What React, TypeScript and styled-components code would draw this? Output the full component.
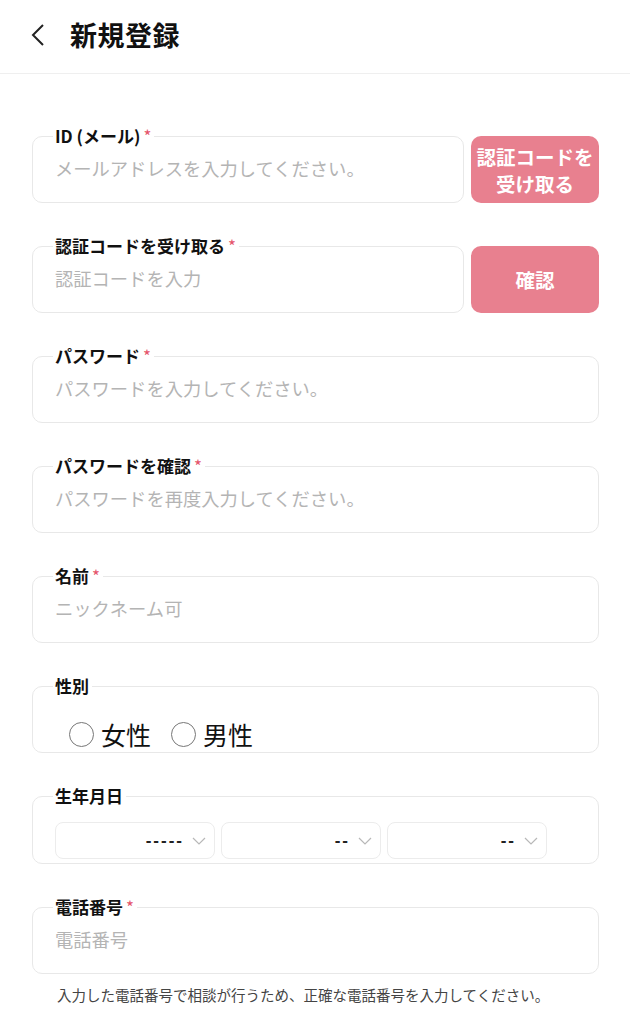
import React from "react";
import styled, { createGlobalStyle } from "styled-components";

const GlobalStyle = createGlobalStyle`
  html, body {
    margin: 0;
    padding: 0;
    background: #fff;
    font-family: "Noto Sans CJK JP", "Noto Sans", sans-serif;
    color: #111;
  }
  * { box-sizing: border-box; }
`;

const Header = styled.header`
  height: 74px;
  display: flex;
  align-items: center;
  padding: 0 0 4px 30px;
  border-bottom: 1px solid #efefef;
`;

const BackButton = styled.button`
  border: none;
  background: none;
  padding: 0;
  width: 22px;
  height: 28px;
  display: flex;
  align-items: center;
  cursor: pointer;
`;

const Title = styled.h1`
  margin: 0 0 0 18px;
  font-size: 27px;
  font-weight: 700;
  letter-spacing: 0.5px;
`;

const Form = styled.form`
  padding: 53px 31px 40px 32px;
  display: flex;
  flex-direction: column;
  gap: 34px;
`;

const Row = styled.div`
  display: flex;
  align-items: flex-end;
  gap: 7px;
`;

const Field = styled.fieldset<{ $bottom?: number }>`
  flex: 1;
  min-width: 0;
  margin: 0;
  padding: 0 22px ${(p) => p.$bottom ?? 13}px;
  border: 1px solid #e8e8e8;
  border-radius: 10px;
`;

const Legend = styled.legend`
  padding: 0 3px 0 2px;
  margin-left: -2px;
  font-size: 17px;
  line-height: 18px;
  font-weight: 700;
  color: #111;
`;

const Required = styled.span`
  color: #e5546b;
  margin-left: 3px;
  font-weight: 400;
`;

const Input = styled.input`
  display: block;
  width: 100%;
  height: 43px;
  margin-top: 1px;
  border: none;
  outline: none;
  padding: 0;
  font-family: inherit;
  font-size: 18.3px;
  color: #222;
  background: transparent;

  &::placeholder {
    color: #b4b4b4;
  }
`;

const PinkButton = styled.button`
  width: 128px;
  height: 67px;
  flex-shrink: 0;
  border: none;
  border-radius: 10px;
  background: #e8808f;
  color: #fff;
  font-family: inherit;
  font-size: 19.5px;
  font-weight: 700;
  line-height: 27px;
  padding: 0;
  cursor: pointer;
`;

const RadioGroup = styled.div`
  display: flex;
  gap: 20px;
  padding: 24px 0 0 14px;
  height: 54px;
`;

const RadioLabel = styled.label`
  display: flex;
  align-items: center;
  gap: 7px;
  font-size: 25px;
  line-height: 30px;
  color: #111;
`;

const Radio = styled.input`
  appearance: none;
  width: 25px;
  height: 25px;
  margin: 0;
  border: 1.5px solid #777;
  border-radius: 50%;
  background: #fff;

  &:checked {
    box-shadow: inset 0 0 0 5px #fff;
    background: #e8808f;
  }
`;

const SelectRow = styled.div`
  display: flex;
  gap: 6px;
  margin-top: 17px;
`;

const SelectWrap = styled.div`
  position: relative;
  width: 160px;
  height: 37px;
`;

const Select = styled.select`
  appearance: none;
  width: 100%;
  height: 100%;
  border: 1px solid #ececec;
  border-radius: 8px;
  background: #fff;
  padding: 0 30px 0 10px;
  font-family: "Liberation Sans", sans-serif;
  font-size: 17px;
  font-weight: 700;
  letter-spacing: 2px;
  color: #222;
  text-align: right;
  text-align-last: right;
  outline: none;
`;

const Chevron = styled.span`
  position: absolute;
  right: 9px;
  top: 50%;
  transform: translateY(-50%);
  display: flex;
  pointer-events: none;
`;

const Help = styled.p`
  margin: -24px 0 0 25px;
  font-size: 14.5px;
  color: #444;
`;

const ChevronDown = () => (
  <svg width="14" height="9" viewBox="0 0 14 9" fill="none">
    <path d="M1 1.5l6 6 6-6" stroke="#b8b8b8" strokeWidth="1.2" />
  </svg>
);

type TextFieldProps = {
  label: string;
  placeholder: string;
  required?: boolean;
  type?: string;
};

function TextField({ label, placeholder, required, type = "text" }: TextFieldProps) {
  return (
    <Field>
      <Legend>
        {label}
        {required && <Required>*</Required>}
      </Legend>
      <Input type={type} placeholder={placeholder} />
    </Field>
  );
}

function DateSelect({ placeholder }: { placeholder: string }) {
  return (
    <SelectWrap>
      <Select defaultValue="">
        <option value="">{placeholder}</option>
      </Select>
      <Chevron>
        <ChevronDown />
      </Chevron>
    </SelectWrap>
  );
}

export default function App() {
  const [gender, setGender] = React.useState("");

  return (
    <>
      <GlobalStyle />
      <Header>
        <BackButton aria-label="戻る">
          <svg width="16" height="24" viewBox="0 0 16 24" fill="none">
            <path d="M13 2L3 12l10 10" stroke="#222" strokeWidth="2" />
          </svg>
        </BackButton>
        <Title>新規登録</Title>
      </Header>

      <Form onSubmit={(e) => e.preventDefault()}>
        <Row>
          <TextField label="ID (メール)" placeholder="メールアドレスを入力してください。" required />
          <PinkButton type="button">
            認証コードを
            <br />
            受け取る
          </PinkButton>
        </Row>

        <Row>
          <TextField label="認証コードを受け取る" placeholder="認証コードを入力" required />
          <PinkButton type="button">確認</PinkButton>
        </Row>

        <TextField label="パスワード" placeholder="パスワードを入力してください。" type="password" required />
        <TextField label="パスワードを確認" placeholder="パスワードを再度入力してください。" type="password" required />
        <TextField label="名前" placeholder="ニックネーム可" required />

        <Field $bottom={3}>
          <Legend>性別</Legend>
          <RadioGroup>
            {["女性", "男性"].map((g) => (
              <RadioLabel key={g}>
                <Radio
                  type="radio"
                  name="gender"
                  checked={gender === g}
                  onChange={() => setGender(g)}
                />
                {g}
              </RadioLabel>
            ))}
          </RadioGroup>
        </Field>

        <Field $bottom={4}>
          <Legend>生年月日</Legend>
          <SelectRow>
            <DateSelect placeholder="-----" />
            <DateSelect placeholder="--" />
            <DateSelect placeholder="--" />
          </SelectRow>
        </Field>

        <TextField label="電話番号" placeholder="電話番号" type="tel" required />
        <Help>入力した電話番号で相談が行うため、正確な電話番号を入力してください。</Help>
      </Form>
    </>
  );
}
